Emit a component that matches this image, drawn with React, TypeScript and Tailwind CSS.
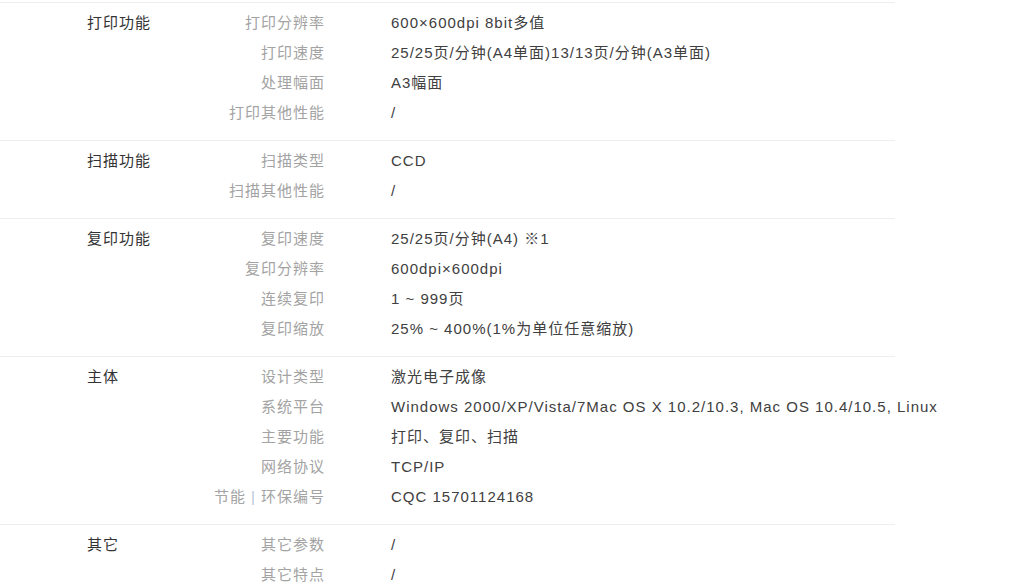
import React from 'react';

type Row = { label: React.ReactNode; value: string };
type Section = { title: string; rows: Row[] };

const sections: Section[] = [
  {
    title: '打印功能',
    rows: [
      { label: '打印分辨率', value: '600×600dpi 8bit多值' },
      { label: '打印速度', value: '25/25页/分钟(A4单面)13/13页/分钟(A3单面)' },
      { label: '处理幅面', value: 'A3幅面' },
      { label: '打印其他性能', value: '/' },
    ],
  },
  {
    title: '扫描功能',
    rows: [
      { label: '扫描类型', value: 'CCD' },
      { label: '扫描其他性能', value: '/' },
    ],
  },
  {
    title: '复印功能',
    rows: [
      { label: '复印速度', value: '25/25页/分钟(A4) ※1' },
      { label: '复印分辨率', value: '600dpi×600dpi' },
      { label: '连续复印', value: '1 ~ 999页' },
      { label: '复印缩放', value: '25% ~ 400%(1%为单位任意缩放)' },
    ],
  },
  {
    title: '主体',
    rows: [
      { label: '设计类型', value: '激光电子成像' },
      { label: '系统平台', value: 'Windows 2000/XP/Vista/7Mac OS X 10.2/10.3, Mac OS 10.4/10.5, Linux' },
      { label: '主要功能', value: '打印、复印、扫描' },
      { label: '网络协议', value: 'TCP/IP' },
      {
        label: (
          <>
            节能<span className="mx-[5px] text-[#b4c6da]">|</span>环保编号
          </>
        ),
        value: 'CQC 15701124168',
      },
    ],
  },
  {
    title: '其它',
    rows: [
      { label: '其它参数', value: '/' },
      { label: '其它特点', value: '/' },
    ],
  },
];

export default function App() {
  return (
    <div
      className="w-[1030px] h-[587px] overflow-hidden bg-white pt-[2px] text-[15px] tracking-[1px]"
      style={{ fontFamily: '"Liberation Sans", "Noto Sans CJK SC", sans-serif' }}
    >
      <div className="w-[895px]">
        {sections.map((s) => (
          <div key={s.title} className="flex border-t border-[#eeeeee] pt-[5px] pb-3">
            <div className="w-[200px] shrink-0 pl-[87px] leading-[30px] text-[#333333]">{s.title}</div>
            <div className="flex flex-col">
              {s.rows.map((r, i) => (
                <div key={i} className="flex h-[30px] items-center">
                  <div className="w-[125px] shrink-0 whitespace-nowrap text-right text-[#a3a3a3]">{r.label}</div>
                  <div className="ml-[66px] whitespace-nowrap text-[#404040]">{r.value}</div>
                </div>
              ))}
            </div>
          </div>
        ))}
      </div>
    </div>
  );
}
